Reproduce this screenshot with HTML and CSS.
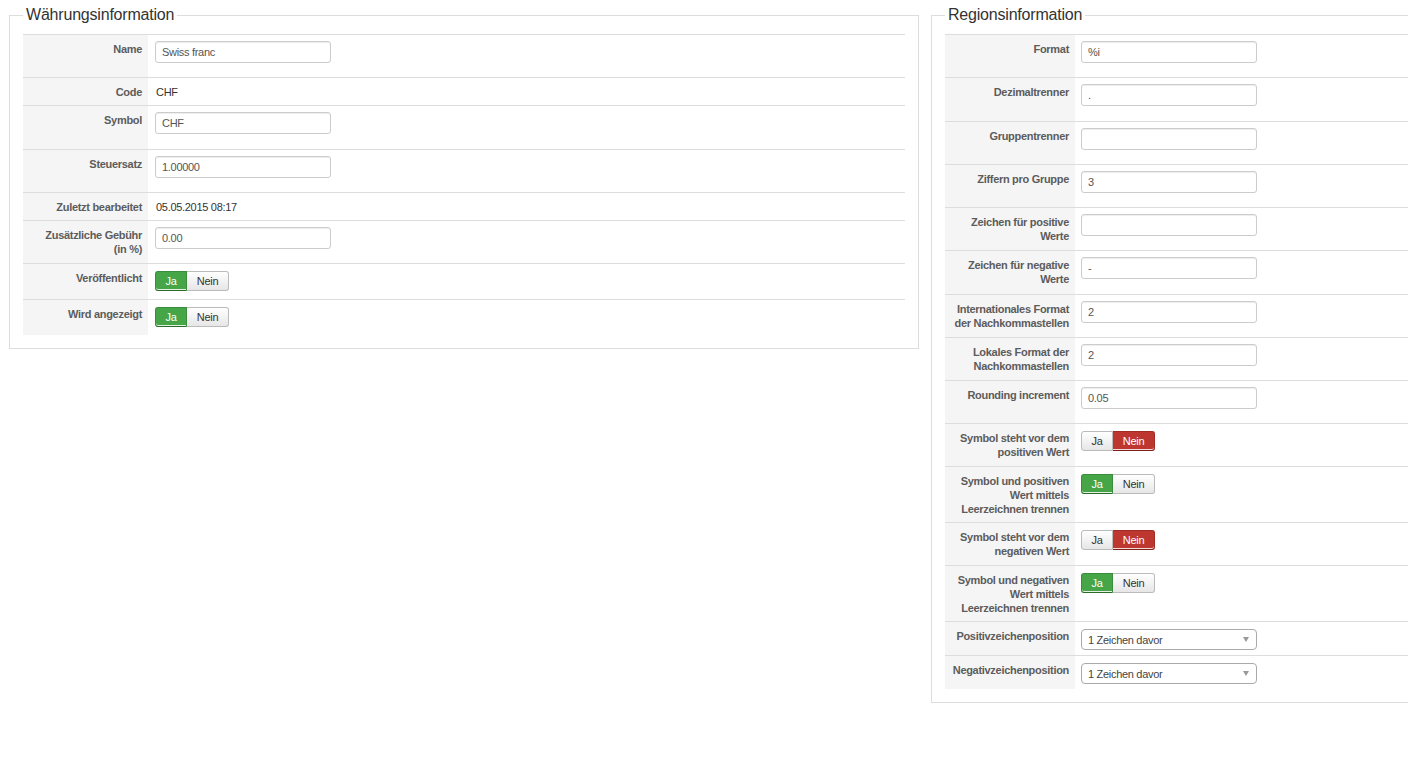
FILE: index.html
```html
<!DOCTYPE html>
<html lang="de">
<head>
  <meta charset="UTF-8">
  <title>Währung bearbeiten</title>
  <link rel="stylesheet" href="styles.css">
</head>
<body>
<div class="seite">

  <fieldset class="block links">
    <legend>Währungsinformation</legend>
    <table class="formular">
      <tr>
        <th>Name</th>
        <td><input class="feld" type="text" value="Swiss franc"></td>
      </tr>
      <tr>
        <th>Code</th>
        <td>CHF</td>
      </tr>
      <tr>
        <th>Symbol</th>
        <td><input class="feld" type="text" value="CHF"></td>
      </tr>
      <tr>
        <th>Steuersatz</th>
        <td><input class="feld" type="text" value="1.00000"></td>
      </tr>
      <tr>
        <th>Zuletzt bearbeitet</th>
        <td>05.05.2015 08:17</td>
      </tr>
      <tr>
        <th>Zusätzliche Gebühr (in&nbsp;%)</th>
        <td><input class="feld" type="text" value="0.00"></td>
      </tr>
      <tr>
        <th>Veröffentlicht</th>
        <td><div class="schalter"><span class="btn ja aktiv">Ja</span><span class="btn nein">Nein</span></div></td>
      </tr>
      <tr>
        <th>Wird angezeigt</th>
        <td><div class="schalter"><span class="btn ja aktiv">Ja</span><span class="btn nein">Nein</span></div></td>
      </tr>
    </table>
  </fieldset>

  <fieldset class="block rechts">
    <legend>Regionsinformation</legend>
    <table class="formular">
      <tr>
        <th>Format</th>
        <td><input class="feld" type="text" value="%i"></td>
      </tr>
      <tr>
        <th>Dezimaltrenner</th>
        <td><input class="feld" type="text" value="."></td>
      </tr>
      <tr>
        <th>Gruppentrenner</th>
        <td><input class="feld" type="text" value=""></td>
      </tr>
      <tr>
        <th>Ziffern pro Gruppe</th>
        <td><input class="feld" type="text" value="3"></td>
      </tr>
      <tr>
        <th>Zeichen für positive Werte</th>
        <td><input class="feld" type="text" value=""></td>
      </tr>
      <tr>
        <th>Zeichen für negative Werte</th>
        <td><input class="feld" type="text" value="-"></td>
      </tr>
      <tr>
        <th>Internationales Format der Nachkommastellen</th>
        <td><input class="feld" type="text" value="2"></td>
      </tr>
      <tr>
        <th>Lokales Format der Nachkommastellen</th>
        <td><input class="feld" type="text" value="2"></td>
      </tr>
      <tr>
        <th>Rounding increment</th>
        <td><input class="feld" type="text" value="0.05"></td>
      </tr>
      <tr class="zweizeilig">
        <th>Symbol steht vor dem positiven Wert</th>
        <td><div class="schalter"><span class="btn ja">Ja</span><span class="btn nein aktiv">Nein</span></div></td>
      </tr>
      <tr>
        <th>Symbol und positiven Wert mittels Leerzeichnen trennen</th>
        <td><div class="schalter"><span class="btn ja aktiv">Ja</span><span class="btn nein">Nein</span></div></td>
      </tr>
      <tr class="zweizeilig">
        <th>Symbol steht vor dem negativen Wert</th>
        <td><div class="schalter"><span class="btn ja">Ja</span><span class="btn nein aktiv">Nein</span></div></td>
      </tr>
      <tr>
        <th>Symbol und negativen Wert mittels Leerzeichnen trennen</th>
        <td><div class="schalter"><span class="btn ja aktiv">Ja</span><span class="btn nein">Nein</span></div></td>
      </tr>
      <tr>
        <th>Positivzeichenposition</th>
        <td>
          <span class="auswahl">
            <select><option>1 Zeichen davor</option></select>
          </span>
        </td>
      </tr>
      <tr>
        <th>Negativzeichenposition</th>
        <td>
          <span class="auswahl">
            <select><option>1 Zeichen davor</option></select>
          </span>
        </td>
      </tr>
    </table>
  </fieldset>

</div>
</body>
</html>
```

FILE: styles.css
```css
html, body {
  margin: 0;
  padding: 0;
  background: #fff;
  color: #333;
  font-family: 'Liberation Sans', Arial, sans-serif;
  overflow: hidden;
}
.seite {
  display: flex;
  align-items: flex-start;
  gap: 12px;
  padding: 5px 0 0 9px;
  width: 1900px;
}
.block {
  box-sizing: border-box;
  width: 910px;
  flex: none;
  margin: 0;
  padding: 9px 13px 13px 13px;
  border: 1px solid #ddd;
}
.block legend {
  padding: 0 3px;
  font-size: 16px;
  line-height: 20px;
  letter-spacing: -0.2px;
  color: #333;
}
.formular {
  width: 100%;
  table-layout: fixed;
  border-collapse: collapse;
  font-size: 11px;
  letter-spacing: -0.3px;
}
.formular tr {
  border-top: 1px solid #ddd;
}
.formular th {
  background: #f5f5f5;
  color: #5c5c5c;
  font-weight: bold;
  text-align: right;
  vertical-align: top;
  line-height: 14px;
  padding: 7px 6px 6px 5px;
}
.links th { width: 114px; }
.rechts th { width: 119px; }
.formular tr.zweizeilig th { padding-bottom: 7px; }
.formular td {
  vertical-align: top;
  line-height: 14px;
  padding: 7px 6px 6px 7px;
  color: #333;
}
.links td { padding-left: 8px; }

/* Texteingaben */
.feld {
  display: block;
  box-sizing: border-box;
  width: 176px;
  height: 22px;
  margin: -1px 0 8.28px -1px;
  padding: 0 6px;
  border: 1px solid #ccc;
  border-radius: 3px;
  box-shadow: inset 0 1px 1px rgba(0,0,0,0.075);
  font-family: inherit;
  font-size: 11px;
  letter-spacing: -0.3px;
  color: #555;
  background: #fff;
}

/* Ja / Nein Schalter */
.schalter {
  display: inline-flex;
  margin: 0 0 2px -1px;
}
.btn {
  box-sizing: border-box;
  height: 20px;
  line-height: 18px;
  text-align: center;
  font-size: 11px;
  color: #333;
  border: 1px solid #bbb;
  background: linear-gradient(#fff, #e6e6e6);
}
.btn.ja {
  width: 32px;
  border-radius: 3px 0 0 3px;
}
.btn.nein {
  width: 42px;
  border-left: 0;
  border-radius: 0 3px 3px 0;
}
.btn.ja.aktiv {
  background: #46a546;
  border-color: #3b8d3b;
  border-bottom-color: #2a6b2a;
  color: #fff;
  box-shadow: inset 0 -1px 0 #e4f1e4;
}
.btn.nein.aktiv {
  background: #bd362f;
  border-color: #a02c26;
  border-bottom-color: #7d201b;
  color: #fff;
  box-shadow: inset 0 -1px 0 #f5dcdb;
}

/* Auswahlliste */
.auswahl {
  position: relative;
  display: block;
  width: 176px;
  margin: 0 0 -1px -1px;
}
.auswahl select {
  display: block;
  box-sizing: border-box;
  width: 176px;
  height: 21px;
  padding: 0 6px;
  border: 1px solid #aaa;
  border-radius: 4px;
  background: #fff;
  font-family: inherit;
  font-size: 11px;
  letter-spacing: -0.3px;
  color: #444;
  appearance: none;
  -webkit-appearance: none;
}
.auswahl::after {
  content: "";
  position: absolute;
  right: 8px;
  top: 8px;
  border-left: 3px solid transparent;
  border-right: 3px solid transparent;
  border-top: 5px solid #999;
}
```
